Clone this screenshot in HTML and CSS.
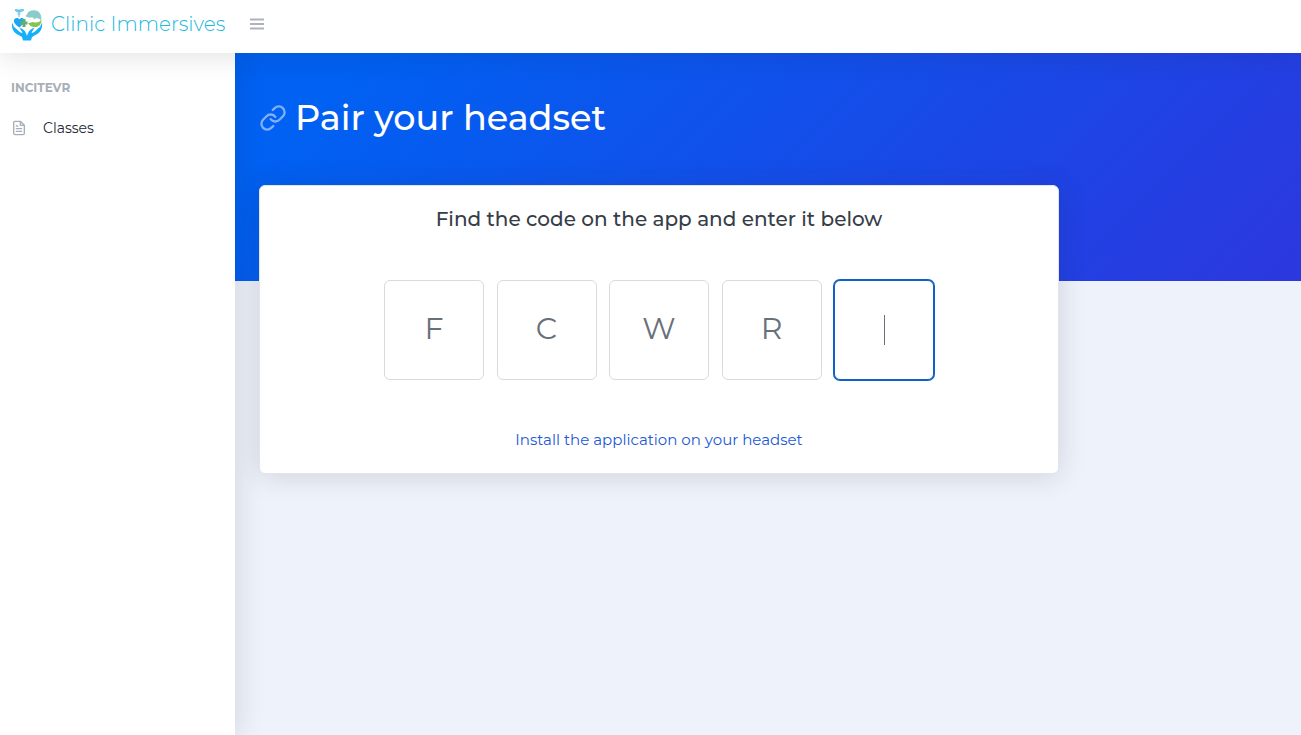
FILE: index.html
```html
<!DOCTYPE html>
<html lang="en">
<head>
<meta charset="utf-8">
<meta name="viewport" content="width=device-width, initial-scale=1">
<title>Clinic Immersives</title>
<link rel="stylesheet" href="styles.css">
</head>
<body class="app">
<header class="topnav">
  <a class="brand" href="#">
    <svg class="brand-logo" viewBox="0 0 32 34" aria-hidden="true">
      <path d="M4 3C6 2 7 3 8 4 9 3 10 2 13 3 11 4.500 10 5 8 5 6 5 5 4.500 4 3ZM8 2V10M6.500 7H9.500" fill="#86d2f0" stroke="#5cc4ee" stroke-width="1"/>
      <path d="M8.500 20.500C3 17 2 14 3.500 12 5 10.500 7.500 10.500 8.500 12.500 9.500 10.500 12.500 10.500 13 12.500 13.500 15 11.500 18 8.500 20.500Z" fill="#1ba6f2"/>
      <path d="M13 12V20M9.500 16H16.500" stroke="#5fae74" stroke-width="3"/>
      <path d="M14.500 9C16.500 8 16 5.500 18 4.500 22 2.500 27 3 29 6.500 30.500 9 30.500 11 30 13.500 29 12 27.500 11 25 11L23.500 12.500 22 10.500C20 10 17.500 11.500 14.500 9Z" fill="#8accc9"/>
      <path d="M30.500 12.500C30.500 18 27 20.500 23.500 20 20.500 20 18.500 18.500 17 16 20 16 21 14 24 15.500 27 16 29 14.500 30.500 12.500Z" fill="#86c450"/>
      <g fill="#16b0fa">
        <path d="M1 15.500C.5 20 1.500 24 5 26.500L11 30 12 33.500H16V29C15 24.500 12 21.500 8.500 21L11.500 25.500 10.500 26C7.500 24.500 6 22 3 20Z"/>
        <path d="M31 15.500C31.500 20 30.500 24 27 26.500L21 30 20 33.500H16V29C17 24.500 20 21.500 23.500 21L20.500 25.500 21.500 26C24.500 24.500 26 22 29 20Z"/>
      </g>
    </svg>
    <span class="brand-name">Clinic Immersives</span>
  </a>
  <button class="menu-button" type="button" aria-label="Toggle sidebar">
    <svg class="icon-menu" viewBox="0 0 14 12" aria-hidden="true"><path d="M0 1.500H14M0 6H14M0 10.500H14"/></svg>
  </button>
</header>
<div class="layout">
  <nav class="sidebar" aria-label="Main">
    <h2 class="sidebar-heading">INCITEVR</h2>
    <a class="sidebar-link" href="#">
      <svg class="icon-file" viewBox="0 0 24 24" aria-hidden="true"><path d="M14 2H6A2 2 0 0 0 4 4V20A2 2 0 0 0 6 22H18A2 2 0 0 0 20 20V8ZM14 2V8H20M16 13H8M16 17H8M10 9H8"/></svg>
      <span>Classes</span>
    </a>
  </nav>
  <main class="content">
    <div class="page-header">
      <h1 class="page-title">
        <svg class="icon-link" viewBox="0 0 24 24" aria-hidden="true"><path d="M10 13a5 5 0 0 0 7.540.54l3-3a5 5 0 0 0-7.070-7.070l-1.720 1.710M14 11a5 5 0 0 0-7.540-.54l-3 3a5 5 0 0 0 7.070 7.070l1.710-1.710"/></svg>
        <span>Pair your headset</span>
      </h1>
    </div>
    <form class="card">
      <h2 class="card-title">Find the code on the app and enter it below</h2>
      <div class="code-row">
        <div class="code-cell"><input class="code-input" aria-label="Character 1" maxlength="1" value="F"></div>
        <div class="code-cell"><input class="code-input" aria-label="Character 2" maxlength="1" value="C"></div>
        <div class="code-cell"><input class="code-input" aria-label="Character 3" maxlength="1" value="W"></div>
        <div class="code-cell"><input class="code-input" aria-label="Character 4" maxlength="1" value="R"></div>
        <div class="code-cell code-cell-active"><input class="code-input" aria-label="Character 5" maxlength="1"></div>
      </div>
      <a class="install-link" href="#">Install the application on your headset</a>
    </form>
  </main>
</div>
</body>
</html>
```
FILE: styles.css
```css
* { box-sizing: border-box; }

.app {
  margin: 0;
  min-height: 100vh;
  display: flex;
  flex-direction: column;
  background: #eef2fa;
  color: #212832;
  font-family: "Montserrat", "Inter", "Liberation Sans", sans-serif;
}

.topnav {
  position: relative;
  z-index: 3;
  display: flex;
  align-items: center;
  gap: 24px;
  height: 53px;
  padding: 0 11px 5px;
  background: #fff;
  box-shadow: 0 2px 28px rgba(33, 40, 50, 0.15);
}

.brand {
  display: flex;
  align-items: center;
  gap: 8px;
  color: #20b8e0;
  text-decoration: none;
}
.brand-logo { width: 32px; height: 34px; }
.brand-name { font-size: 20px; line-height: 24px; font-weight: 300; }

.menu-button {
  display: flex;
  padding: 1px;
  border: 0;
  background: none;
}
.icon-menu { width: 14px; height: 12px; fill: none; stroke: #afb2b6; stroke-width: 2; }

.layout { flex: 1; display: flex; }

.sidebar {
  position: relative;
  z-index: 2;
  flex: 0 0 235px;
  padding: 28px 11px;
  background: #fff;
  box-shadow: 0 2px 28px rgba(33, 40, 50, 0.15);
}
.sidebar-heading {
  margin: 0 0 22px;
  font-size: 12px;
  line-height: 14px;
  font-weight: 700;
  color: #a7aeb8;
}
.sidebar-link {
  display: flex;
  align-items: center;
  gap: 16px;
  font-size: 14px;
  line-height: 22px;
  color: #212832;
  text-decoration: none;
}
.icon-file { width: 16px; height: 16px; fill: none; stroke: #a7aeb8; stroke-width: 2; stroke-linecap: round; stroke-linejoin: round; }

.content { flex: 1; min-width: 0; }

.page-header {
  height: 228px;
  padding: 40px 24px;
  background: linear-gradient(135deg, #0061f2 0%, #0061f2 10%, #2c37df 100%);
}
.page-title {
  display: flex;
  align-items: center;
  gap: 8px;
  margin: 0;
  color: #fff;
  font-size: 35px;
  line-height: 50px;
  font-weight: 500;
}
.icon-link { width: 28px; height: 28px; fill: none; stroke: #80b0f8; stroke-width: 2; stroke-linecap: round; stroke-linejoin: round; }

.card {
  display: flex;
  flex-direction: column;
  align-items: center;
  max-width: 800px;
  margin: -96px 24px 24px;
  padding: 20px 20px 21px;
  border: 1px solid #e1e6ee;
  border-radius: 6px;
  background: #fff;
  box-shadow: 0 2px 28px rgba(33, 40, 50, 0.15);
}
.card-title {
  margin: 0 0 48px;
  font-size: 20px;
  line-height: 26px;
  font-weight: 500;
  color: #363d47;
}
.code-row {
  display: flex;
  justify-content: space-between;
  width: 100%;
  max-width: 550px;
}
.code-cell { position: relative; width: 100px; height: 100px; }
.code-input {
  width: 100%;
  height: 100%;
  padding: 0 0 3px;
  border: 1px solid #d9dadc;
  border-radius: 6px;
  background: #fff;
  color: #69707a;
  font: inherit;
  font-size: 30px;
  text-align: center;
}
.code-cell-active .code-input {
  border-color: #1060c8;
  box-shadow: 0 0 0 1px #1060c8;
}
.code-cell-active::after {
  content: "";
  position: absolute;
  top: 35px;
  left: 50px;
  width: 1px;
  height: 30px;
  background: #69707a;
}
.install-link {
  margin-top: 48px;
  font-size: 15px;
  line-height: 24px;
  color: #2058d8;
  text-decoration: none;
}
```
